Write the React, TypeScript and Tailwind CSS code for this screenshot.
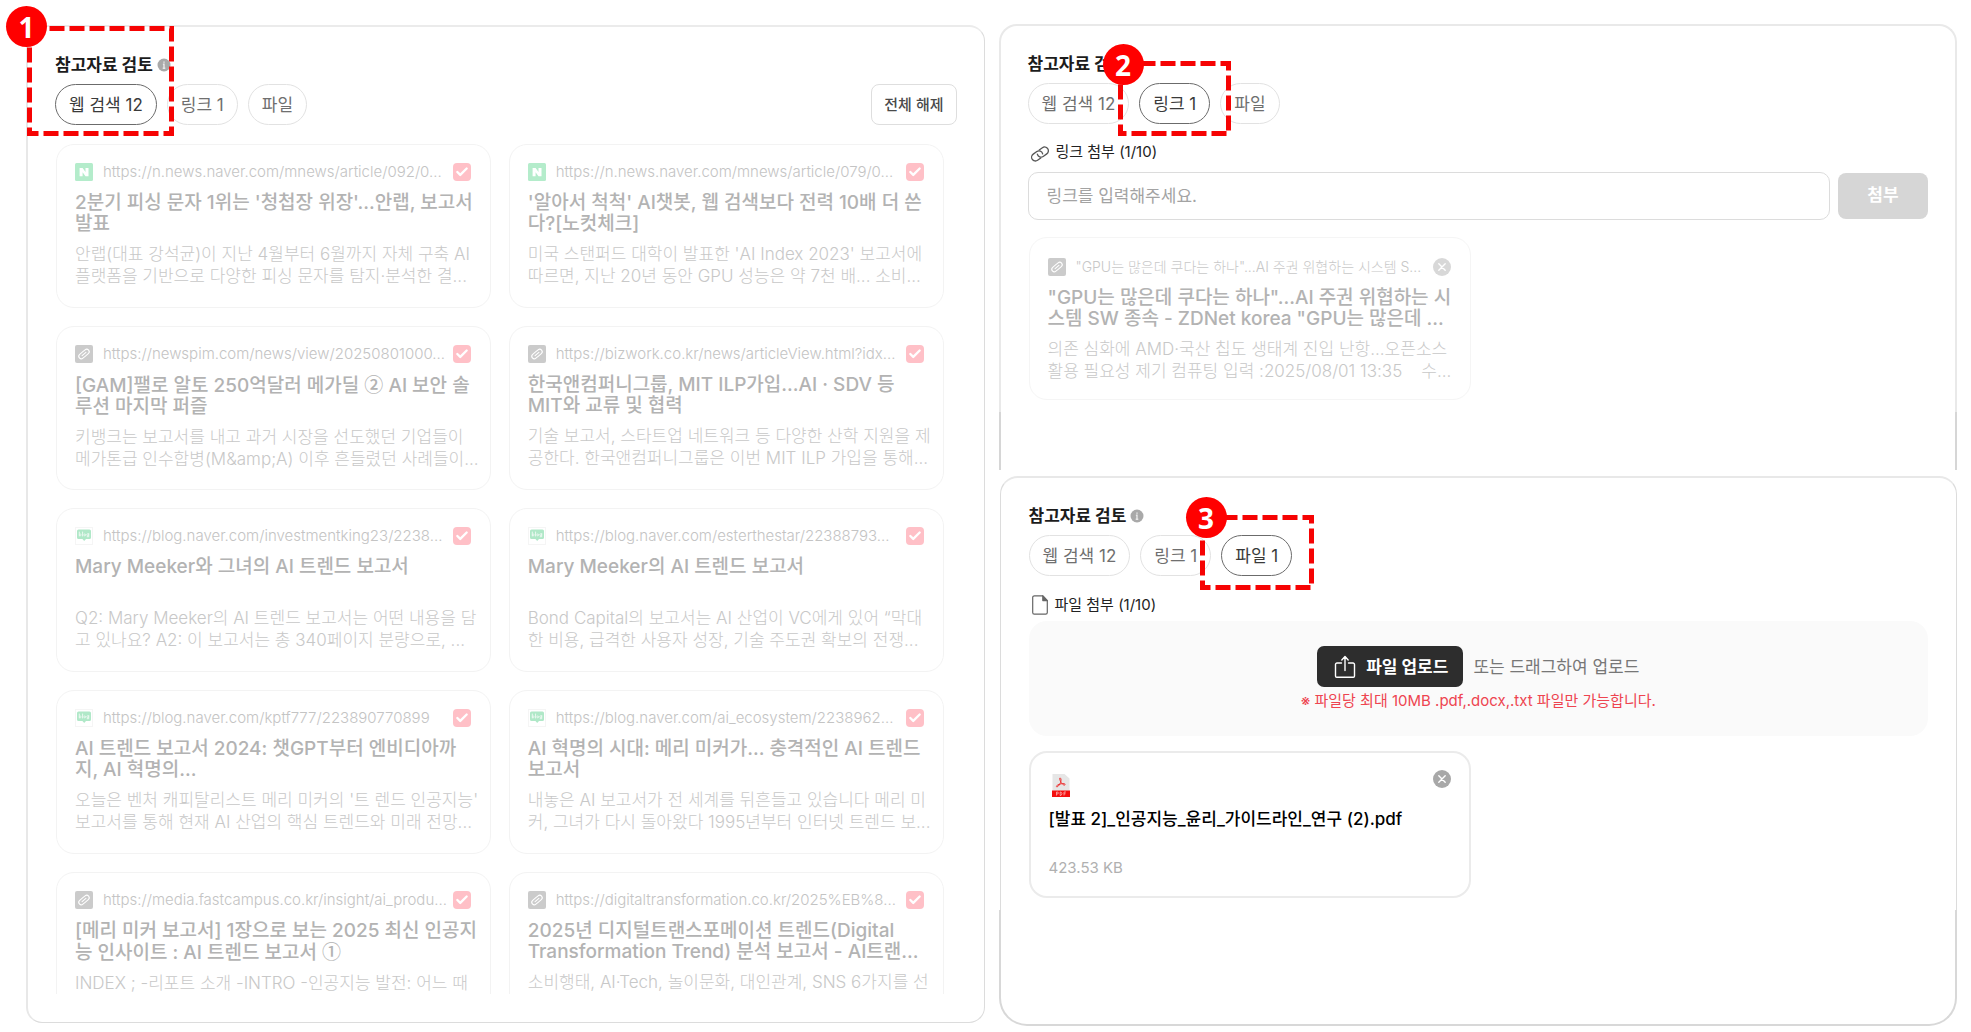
import type { ReactNode } from "react";
import { Check } from "lucide-react";

type Site = "naver" | "blog" | "link";

type Article = {
  site: Site;
  url: string;
  title: string[];
  body: string[];
};

const articles: Article[] = [
  {
    site: "naver",
    url: "https://n.news.naver.com/mnews/article/092/0...",
    title: ["2분기 피싱 문자 1위는 '청첩장 위장'...안랩, 보고서", "발표"],
    body: ["안랩(대표 강석균)이 지난 4월부터 6월까지 자체 구축 AI", "플랫폼을 기반으로 다양한 피싱 문자를 탐지·분석한 결..."],
  },
  {
    site: "naver",
    url: "https://n.news.naver.com/mnews/article/079/0...",
    title: ["'알아서 척척' AI챗봇, 웹 검색보다 전력 10배 더 쓴", "다?[노컷체크]"],
    body: ["미국 스탠퍼드 대학이 발표한 'AI Index 2023' 보고서에", "따르면, 지난 20년 동안 GPU 성능은 약 7천 배... 소비..."],
  },
  {
    site: "link",
    url: "https://newspim.com/news/view/20250801000...",
    title: ["[GAM]팰로 알토 250억달러 메가딜 ② AI 보안 솔", "루션 마지막 퍼즐"],
    body: ["키뱅크는 보고서를 내고 과거 시장을 선도했던 기업들이", "메가톤급 인수합병(M&amp;A) 이후 흔들렸던 사례들이..."],
  },
  {
    site: "link",
    url: "https://bizwork.co.kr/news/articleView.html?idx...",
    title: ["한국앤컴퍼니그룹, MIT ILP가입...AI · SDV 등", "MIT와 교류 및 협력"],
    body: ["기술 보고서, 스타트업 네트워크 등 다양한 산학 지원을 제", "공한다. 한국앤컴퍼니그룹은 이번 MIT ILP 가입을 통해..."],
  },
  {
    site: "blog",
    url: "https://blog.naver.com/investmentking23/2238...",
    title: ["Mary Meeker와 그녀의 AI 트렌드 보고서"],
    body: ["Q2: Mary Meeker의 AI 트렌드 보고서는 어떤 내용을 담", "고 있나요? A2: 이 보고서는 총 340페이지 분량으로, ..."],
  },
  {
    site: "blog",
    url: "https://blog.naver.com/esterthestar/22388793...",
    title: ["Mary Meeker의 AI 트렌드 보고서"],
    body: ["Bond Capital의 보고서는 AI 산업이 VC에게 있어 “막대", "한 비용, 급격한 사용자 성장, 기술 주도권 확보의 전쟁..."],
  },
  {
    site: "blog",
    url: "https://blog.naver.com/kptf777/223890770899",
    title: ["AI 트렌드 보고서 2024: 챗GPT부터 엔비디아까", "지, AI 혁명의..."],
    body: ["오늘은 벤처 캐피탈리스트 메리 미커의 '트 렌드 인공지능'", "보고서를 통해 현재 AI 산업의 핵심 트렌드와 미래 전망..."],
  },
  {
    site: "blog",
    url: "https://blog.naver.com/ai_ecosystem/2238962...",
    title: ["AI 혁명의 시대: 메리 미커가... 충격적인 AI 트렌드", "보고서"],
    body: ["내놓은 AI 보고서가 전 세계를 뒤흔들고 있습니다 메리 미", "커, 그녀가 다시 돌아왔다 1995년부터 인터넷 트렌드 보..."],
  },
  {
    site: "link",
    url: "https://media.fastcampus.co.kr/insight/ai_produ...",
    title: ["[메리 미커 보고서] 1장으로 보는 2025 최신 인공지", "능 인사이트 : AI 트렌드 보고서 ①"],
    body: ["INDEX ; -리포트 소개 -INTRO -인공지능 발전: 어느 때"],
  },
  {
    site: "link",
    url: "https://digitaltransformation.co.kr/2025%EB%8...",
    title: ["2025년 디지털트랜스포메이션 트렌드(Digital", "Transformation Trend) 분석 보고서 - AI트랜..."],
    body: ["소비행태, AI·Tech, 놀이문화, 대인관계, SNS 6가지를 선"],
  },
];

function SiteIcon({ site }: { site: Site }) {
  if (site === "naver") {
    return (
      <svg viewBox="0 0 18 18" className="size-[18px] shrink-0" aria-hidden="true">
        <rect width="18" height="18" rx="1.5" fill="#b4eccb" />
        <path d="M4.600 5h3l2.900 4.100V5h3v8.300h-3L7.600 9.300v4h-3z" fill="#fff" />
      </svg>
    );
  }
  if (site === "blog") {
    return (
      <svg viewBox="0 0 18 18" className="size-[18px] shrink-0" aria-hidden="true">
        <rect x=".5" y=".5" width="17" height="17" fill="#fff" stroke="#f5f5f5" />
        <path d="M3.500 2.500h11a1.500 1.500 0 0 1 1.500 1.500v6.500a1.500 1.500 0 0 1-1.500 1.500H11l-1.800 2L7.400 12H3.500A1.500 1.500 0 0 1 2 10.500V4a1.500 1.500 0 0 1 1.500-1.500z" fill="#b0e8c8" />
        <g stroke="#fff" strokeWidth="1" fill="none" opacity=".75">
          <path d="M4.300 5v4M7.600 5v4M13.700 6.500v3.200h-1.500" strokeLinecap="round" />
          <circle cx="5.200" cy="7.900" r=".9" />
          <circle cx="9.700" cy="7.900" r=".9" />
          <circle cx="12.700" cy="7.700" r=".9" />
        </g>
      </svg>
    );
  }
  return (
    <svg viewBox="0 0 18 18" className="size-[18px] shrink-0" fill="none" aria-hidden="true">
      <rect width="18" height="18" rx="2" fill="#cbcbcb" />
      <g transform="rotate(-40 9 9)" stroke="#fff" strokeWidth="1.100" strokeLinecap="round">
        <path d="M9.600 6.500H5.500a2.500 2.500 0 0 0 0 5h2M10.500 6.500h2a2.500 2.500 0 0 1 0 5H8.400M6.500 9h5" />
      </g>
    </svg>
  );
}

function CloseButton({ label, tone }: { label: string; tone: string }) {
  return (
    <button type="button" aria-label={label} className={`size-[18px] shrink-0 ${tone}`}>
      <svg viewBox="0 0 18 18" className="size-full" aria-hidden="true">
        <circle cx="9" cy="9" r="9" fill="currentColor" />
        <path d="M5.800 5.800l6.400 6.400M12.200 5.800l-6.400 6.400" stroke="#fff" strokeWidth="1.400" strokeLinecap="round" />
      </svg>
    </button>
  );
}

function Callout({ step, place, badge, width, height }: { step: number; place: string; badge: string; width: number; height: number }) {
  return (
    <div className={`pointer-events-none absolute z-10 ${place}`}>
      <svg width={width + 5} height={height + 5} fill="none" aria-hidden="true">
        <path
          d={`M2.500 2.500h${width}v${height}h${-width}z`}
          stroke="#f60303"
          strokeWidth="5"
          strokeDasharray="15 5"
        />
      </svg>
      <span className={`absolute flex size-[41px] items-center justify-center rounded-full bg-[#ff0000] font-['Noto_Sans','Open_Sans',sans-serif] text-[28px] leading-none font-bold text-white ${badge}`}>
        {step}
      </span>
    </div>
  );
}

function Tab({ children, active = false }: { children: ReactNode; active?: boolean }) {
  return (
    <button
      type="button"
      role="tab"
      aria-selected={active}
      className={`h-[41px] rounded-full border bg-white px-[13px] text-[17px] leading-5 whitespace-nowrap ${
        active ? "border-[#6b6b6b] text-[#3a3a3a]" : "border-[#e2e2e2] text-[#6f6f6f]"
      }`}
    >
      {children}
    </button>
  );
}

function PanelHeader({ selected, fileLabel, action }: { selected: number; fileLabel: string; action?: ReactNode }) {
  return (
    <header>
      <h2 className="flex h-6 items-center gap-1 text-[17px] leading-6 font-bold text-[#1c1c1c]">
        참고자료 검토
        <svg viewBox="0 0 14 14" className="size-3.5" aria-hidden="true">
          <circle cx="7" cy="7" r="6.500" fill="#a9a9a9" />
          <path d="M7 3.400v1.300M5.900 6.300H7v4M5.700 10.300h2.600" stroke="#e8e8e8" strokeWidth="1.400" fill="none" />
        </svg>
      </h2>
      <div className="mt-[7px] flex items-center justify-between">
        <div role="tablist" className="flex gap-2.5">
          <Tab active={selected === 0}>웹 검색 12</Tab>
          <Tab active={selected === 1}>링크 1</Tab>
          <Tab active={selected === 2}>{fileLabel}</Tab>
        </div>
        {action}
      </div>
    </header>
  );
}

/* Circled numerals are taken from the Korean face, where they are one em wide. */
function TitleLine({ text }: { text: string }) {
  return (
    <span className="block">
      {text.split(/([①②])/).map((part, index) =>
        part === "①" || part === "②" ? (
          <span key={index} className="font-['Noto_Sans_CJK_KR',sans-serif] leading-none">{part}</span>
        ) : (
          part
        ),
      )}
    </span>
  );
}

function CardText({ title, body }: { title: string[]; body: string[] }) {
  return (
    <>
      <h3 className="mt-[11px] min-h-[42px] text-[19px] leading-[21px] font-medium whitespace-pre text-[#b3b3b3]">
        {title.map((line) => (
          <TitleLine key={line} text={line} />
        ))}
      </h3>
      <p className="mt-[9px] text-[17px] leading-[22px] font-light whitespace-pre text-[#c8c8c8]">
        {body.map((line) => (
          <span key={line} className="block">{line}</span>
        ))}
      </p>
    </>
  );
}

function ArticleCard({ article }: { article: Article }) {
  return (
    <article className="h-[164px] rounded-[18px] border border-[#f3f3f3] pt-[18px] pr-[19px] pl-[18px]">
      <div className="flex h-[18px] items-center gap-2.5">
        <SiteIcon site={article.site} />
        <a href={article.url} className="min-w-0 flex-1 text-[15px] leading-[18px] font-light whitespace-nowrap text-[#c4c4c4]">
          {article.url}
        </a>
        <label className="relative grid size-[18px] shrink-0 place-items-center">
          <input type="checkbox" defaultChecked aria-label={article.title[0]} className="absolute inset-0 appearance-none rounded-[4px] bg-[#ffc0c7]" />
          <Check className="relative size-3.5 text-white" strokeWidth={4} aria-hidden="true" />
        </label>
      </div>
      <CardText title={article.title} body={article.body} />
    </article>
  );
}

function WebSearchPanel() {
  return (
    <section className="relative mt-px mb-[3px] flex min-h-0 min-w-0 flex-col rounded-2xl border-t-2 border-r border-b border-l-2 border-t-[#ebebeb] border-r-[#dcdcdc] border-b-[#dcdcdc] border-l-[#e8e8e8] px-[27px] pt-[26px] pb-7">
      <PanelHeader
        selected={0}
        fileLabel="파일"
        action={
          <button type="button" className="h-[41px] rounded-lg border border-[#dedede] px-3 text-[15px] leading-5 font-medium text-[#4a4a4a]">
            전체 해제
          </button>
        }
      />
      <div className="mt-[19px] mr-[13px] ml-px grid min-h-0 flex-1 grid-cols-2 content-start gap-[18px] overflow-hidden">
        {articles.map((article) => (
          <ArticleCard key={article.url} article={article} />
        ))}
      </div>
      <Callout step={1} place="-top-px -left-px" badge="-top-[20px] -left-[21px]" width={142} height={105} />
    </section>
  );
}

function LinkPanel() {
  return (
    <section className="relative">
      <div className="rounded-t-[18px] border-x-2 border-t-2 border-[#e9e9e9] px-[27px] pt-[26px] pb-3">
        <PanelHeader selected={1} fileLabel="파일" />
        <label htmlFor="link-url" className="mt-4 flex h-6 items-center gap-1.5 pl-0.5 text-[15px] leading-6 text-[#222]">
          <svg viewBox="0 0 20 20" className="mt-1 size-5" fill="none" stroke="#555" strokeWidth="1.300" strokeLinecap="round" aria-hidden="true">
            <g transform="rotate(-35 10 10)">
              <path d="M8.300 13.800H4.400a3.800 3.800 0 0 1 0-7.600h4.400a3.800 3.800 0 0 1 3.500 5.200" />
              <path d="M11.700 6.200h3.900a3.800 3.800 0 0 1 0 7.600h-4.400a3.800 3.800 0 0 1-3.500-5.200" />
            </g>
          </svg>
          링크 첨부 (1/10)
        </label>
        <div className="mt-2 flex items-center gap-2">
          <input
            id="link-url"
            type="url"
            placeholder="링크를 입력해주세요."
            className="h-12 min-w-0 flex-1 rounded-[10px] border border-[#dcdcdc] px-[18px] text-[17px] text-[#333] placeholder:text-[#a3a3a3]"
          />
          <button type="button" className="h-[46px] w-[90px] rounded-lg bg-[#d6d6d6] text-[17px] font-bold text-white">
            첨부
          </button>
        </div>
        <article className="mt-[17px] ml-px h-[163px] w-[442px] rounded-[18px] border border-[#f5f5f5] pt-5 pr-[19px] pl-[18px]">
          <div className="flex h-[18px] items-center gap-2.5">
            <SiteIcon site="link" />
            <a href="#source" className="min-w-0 flex-1 text-[14px] leading-[18px] font-light whitespace-nowrap text-[#c8c8c8]">
              "GPU는 많은데 쿠다는 하나"...AI 주권 위협하는 시스템 S...
            </a>
            <CloseButton label="링크 삭제" tone="text-[#d8d8d8]" />
          </div>
          <CardText
            title={["\"GPU는 많은데 쿠다는 하나\"...AI 주권 위협하는 시", "스템 SW 종속 - ZDNet korea \"GPU는 많은데 ..."]}
            body={["의존 심화에 AMD·국산 칩도 생태계 진입 난항...오픈소스", "활용 필요성 제기 컴퓨팅 입력 :2025/08/01 13:35    수..."]}
          />
        </article>
      </div>
      <div className="h-[58px] border-x-2 border-[#d6d6d6]" />
      <Callout step={2} place="top-[37px] left-[119px]" badge="-top-[17px] -left-[15px]" width={108} height={70} />
    </section>
  );
}

function FilePanel() {
  return (
    <section className="relative mt-1.5 flex min-h-0 flex-1 flex-col">
      <div className="ml-px rounded-t-[18px] border-x border-t-2 border-x-[#dcdcdc] border-t-[#e8e8e8] px-7 pt-[26px] pb-3">
        <PanelHeader selected={2} fileLabel="파일 1" />
        <div className="mt-[17px] flex h-6 items-center gap-[7px] pl-[3px] text-[15px] leading-6 text-[#222]">
          <svg viewBox="0 0 16 20" className="h-5 w-4" fill="none" stroke="#666" strokeWidth="1.200" strokeLinejoin="round" aria-hidden="true">
            <path d="M2.500.8h8.300l4.500 4.800v12a1.600 1.600 0 0 1-1.600 1.600H2.300A1.600 1.600 0 0 1 .7 17.600V2.500A1.700 1.700 0 0 1 2.500.8z" />
            <path d="M10.800.8v4.800h4.500z" fill="#666" />
          </svg>
          파일 첨부 (1/10)
        </div>
        <div className="mt-1 flex h-[115px] flex-col items-center rounded-[18px] bg-[#fafafa] pt-[25px]">
          <div className="flex items-center gap-2.5">
            <button type="button" className="flex h-[41px] items-center gap-2.5 rounded-[7px] bg-[#2d2d2d] pr-[15px] pl-[17px] text-[17px] leading-5 font-bold whitespace-nowrap text-white">
              <svg viewBox="0 0 22 24" className="h-6 w-[22px]" fill="none" stroke="#fff" strokeWidth="1.400" strokeLinecap="round" strokeLinejoin="round" aria-hidden="true">
                <path d="M7.500 8H3a1.500 1.500 0 0 0-1.500 1.500V21A1.200 1.200 0 0 0 2.700 22.200h16.600a1.200 1.200 0 0 0 1.200-1.200V9.500A1.500 1.500 0 0 0 19 8h-4.500M11 15.500V1.800M7.800 5L11 1.600 14.200 5" />
              </svg>
              파일 업로드
            </button>
            <span className="text-[17px] leading-6 whitespace-nowrap text-[#777]">또는 드래그하여 업로드</span>
          </div>
          <p className="mt-[3px] text-[15px] leading-[22px] whitespace-nowrap text-[#ee4450]">※ 파일당 최대 10MB .pdf,.docx,.txt 파일만 가능합니다.</p>
        </div>
        <article className="mt-[15px] h-[147px] w-[442px] rounded-[18px] border-2 border-[#ebebeb] px-[18px] pt-[17px]">
          <div className="flex h-7 items-start justify-between">
            <svg viewBox="0 0 18 23" className="mt-1 ml-[3px] h-[23px] w-[18px]" aria-hidden="true">
              <path d="M1 0h11.500L17.500 4.500V17H.5V.5z" fill="#e6e6e6" />
              <path d="M7.700 4.200c1.700-.6 1.500 2.300.9 4.100-.6 1.800-2 4-3.400 4.500-1.300.3-.9-1.200.8-2 2-.9 4.600-1.400 6.200-1.100 1.700.4 1 1.800-.4 1.300C10 10.400 7.500 6.500 7.700 4.200z" fill="none" stroke="#ee3333" strokeWidth="1" />
              <rect y="16.500" width="18" height="6.500" fill="#f40f0f" />
              <path d="M4.500 21.500v-3.500h1.300q1 1 0 2H4.500M8.200 18v3.500h.8q2-1.700 0-3.500zM12 21.500V18h2M12 19.800h1.600" stroke="#ffb0b0" strokeWidth=".8" fill="none" />
            </svg>
            <CloseButton label="파일 삭제" tone="text-[#a8a8a8]" />
          </div>
          <h3 className="mt-[9px] text-[17px] leading-6 font-medium whitespace-nowrap text-black">[발표 2]_인공지능_윤리_가이드라인_연구 (2).pdf</h3>
          <p className="mt-[25px] text-[15px] leading-6 text-[#b0b0b0]">423.53 KB</p>
        </article>
      </div>
      <div className="flex-1 rounded-b-[28px] border-x-2 border-b-2 border-[#d8d8d8]" />
      <Callout step={3} place="top-[39px] left-[201px]" badge="-top-[18px] -left-[14px]" width={109} height={70} />
    </section>
  );
}

export default function App() {
  return (
    <main className="grid h-screen grid-cols-2 grid-rows-1 gap-3.5 overflow-hidden bg-white pt-6 pr-3.5 pb-1.5 pl-[26px] font-['Inter','Noto_Sans_CJK_KR',sans-serif]">
      <WebSearchPanel />
      <div className="flex min-w-0 flex-col">
        <LinkPanel />
        <FilePanel />
      </div>
    </main>
  );
}
